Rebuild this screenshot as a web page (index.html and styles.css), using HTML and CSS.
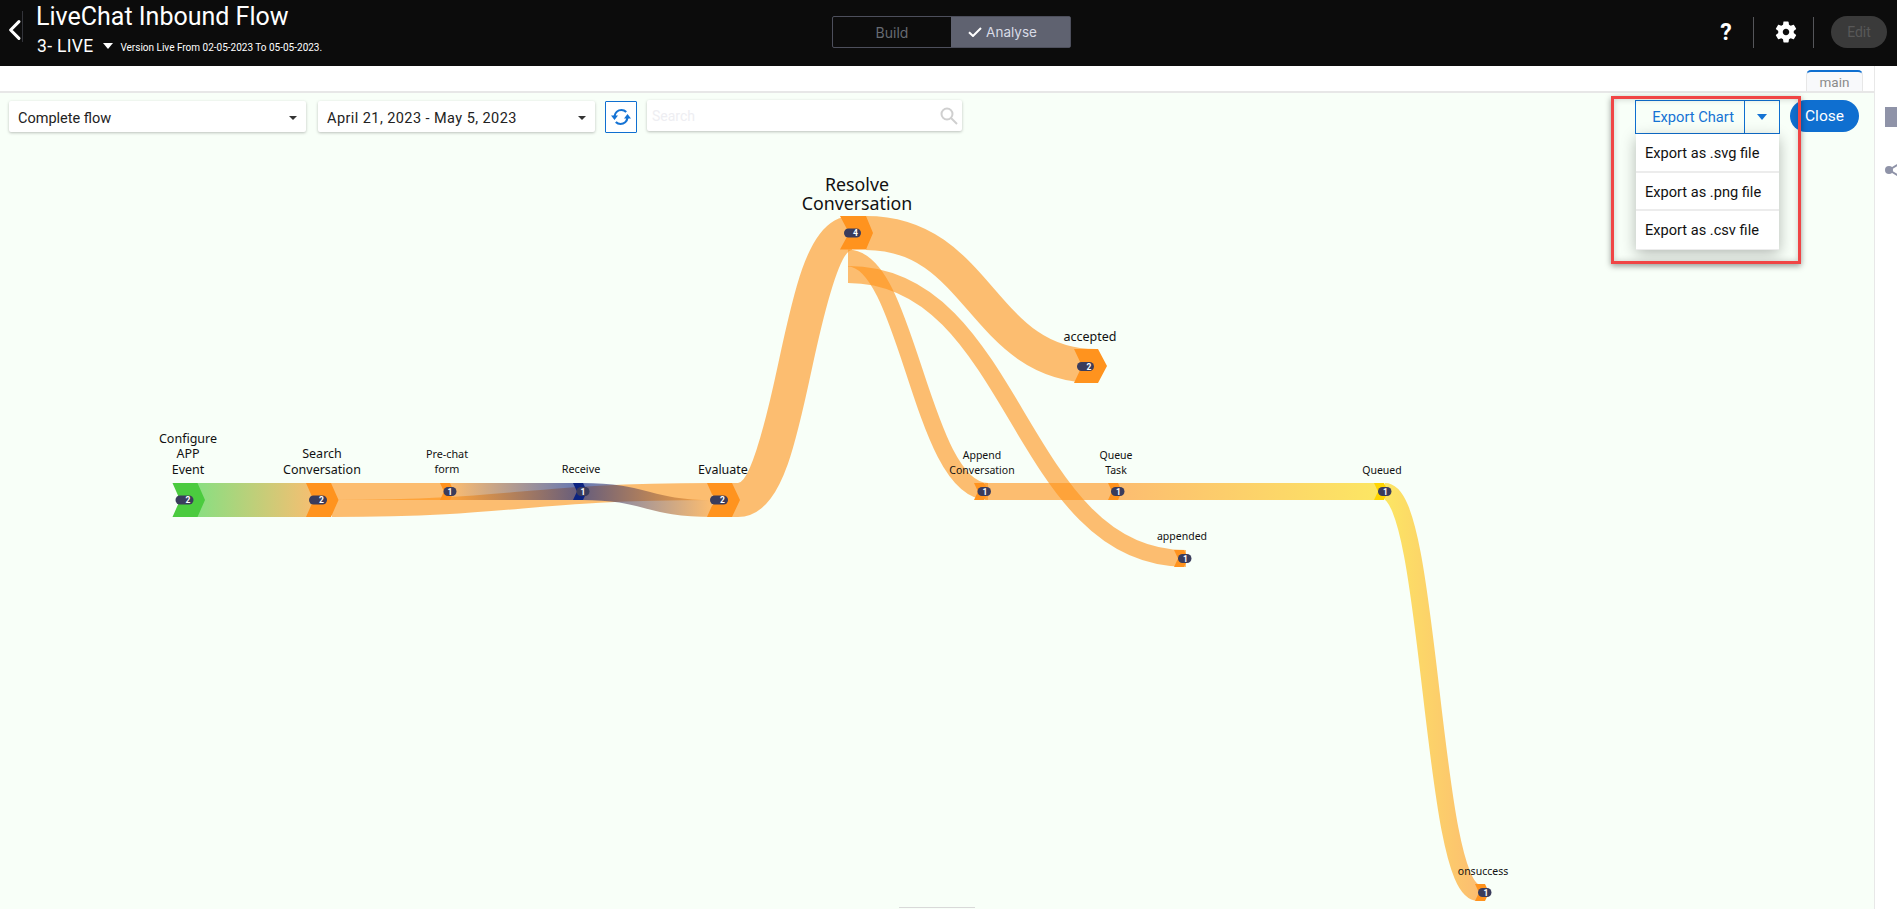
FILE: index.html
```html
<!DOCTYPE html>
<html lang="en">
<head>
<meta charset="utf-8">
<title>LiveChat Inbound Flow</title>
<link rel="stylesheet" href="styles.css">
</head>
<body>
<header class="topbar">
  <div class="topbar-left">
    <button class="back" aria-label="Back">
      <svg width="16" height="24" viewBox="0 0 16 24"><path class="back-chevron" d="M12.5 2.5 3 12l9.500 9.500"/></svg>
    </button>
    <div class="flow-title">
      <h1 class="flow-name">LiveChat Inbound Flow</h1>
      <div class="flow-meta">
        <span class="flow-version">3- LIVE</span>
        <span class="meta-caret"></span>
        <span class="flow-live">Version Live From 02-05-2023 To 05-05-2023.</span>
      </div>
    </div>
  </div>
  <div class="mode-switch">
    <span class="mode mode-build">Build</span>
    <span class="mode mode-analyse">
      <svg width="14" height="10" viewBox="0 0 14 10"><path class="check" d="M1 5.200 5 9 13 1"/></svg>
      Analyse
    </span>
  </div>
  <div class="topbar-right">
    <span class="help">?</span>
    <span class="bar-divider"></span>
    <svg class="gear" width="26" height="26" viewBox="0 0 24 24"><path d="M19.140 12.940c.04-.3.06-.61.06-.94 0-.32-.02-.64-.07-.94l2.030-1.580a.49.49 0 0 0 .12-.61l-1.920-3.320a.488.488 0 0 0-.59-.22l-2.390.96c-.5-.38-1.030-.7-1.620-.94l-.36-2.540a.484.484 0 0 0-.48-.41h-3.840c-.24 0-.43.17-.47.41l-.36 2.540c-.59.24-1.130.57-1.620.94l-2.390-.96c-.22-.08-.47 0-.59.22L2.740 8.870c-.12.21-.08.47.12.61l2.030 1.580c-.05.3-.09.63-.09.94s.02.64.07.94l-2.030 1.580a.49.49 0 0 0-.12.61l1.920 3.320c.12.22.37.29.59.22l2.390-.96c.5.38 1.030.7 1.620.94l.36 2.540c.05.24.24.41.48.41h3.840c.24 0 .44-.17.47-.41l.36-2.540c.59-.24 1.130-.56 1.620-.94l2.390.96c.22.08.47 0 .59-.22l1.920-3.320c.12-.22.07-.47-.12-.61l-2.010-1.580zM12 15c-1.650 0-3-1.350-3-3s1.350-3 3-3 3 1.350 3 3-1.350 3-3 3z"/></svg>
    <span class="bar-divider"></span>
    <span class="edit-pill">Edit</span>
  </div>
</header>

<div class="body-row">
  <main class="workspace">
    <div class="tabstrip"><span class="tab">main</span></div>
    <section class="canvas">
      <svg class="chart" width="1874" height="816" viewBox="0 93 1874 816">
        <defs>
          <linearGradient id="g-config" gradientUnits="userSpaceOnUse" x1="197" y1="0" x2="320" y2="0">
            <stop offset="0" stop-color="#3fc932"/><stop offset="1" stop-color="#ff9116"/>
          </linearGradient>
          <linearGradient id="g-pre" gradientUnits="userSpaceOnUse" x1="450" y1="0" x2="575" y2="0">
            <stop offset="0" stop-color="#ff9116"/><stop offset="1" stop-color="#0a2181"/>
          </linearGradient>
          <linearGradient id="g-rec" gradientUnits="userSpaceOnUse" x1="585" y1="0" x2="712" y2="0">
            <stop offset="0" stop-color="#0a2181"/><stop offset="1" stop-color="#ff9116"/>
          </linearGradient>
          <linearGradient id="g-queue" gradientUnits="userSpaceOnUse" x1="1120" y1="0" x2="1376" y2="0">
            <stop offset="0" stop-color="#ff9116"/><stop offset="1" stop-color="#ffd500"/>
          </linearGradient>
          <linearGradient id="g-done" gradientUnits="userSpaceOnUse" x1="1385" y1="0" x2="1478" y2="0">
            <stop offset="0" stop-color="#ffd500"/><stop offset="1" stop-color="#ff9116"/>
          </linearGradient>
        </defs>

        <g class="links">
          <path class="w34" stroke="url(#g-config)" d="M197 500H320"/>
          <path class="w17 orange" d="M331 491.500H445"/>
          <path class="w17 orange" d="M332 508.500C522 508.500 522 491.500 712 491.500"/>
          <path class="w17" stroke="url(#g-pre)" d="M450 491.500H578"/>
          <path class="w17" stroke="url(#g-rec)" d="M582 491.500C647 491.500 647 508.500 712 508.500"/>
          <path class="w34 orange" d="M725 500H738C795 500 795 233 852 233"/>
          <path class="w34 orange" d="M866 233C981 233 981 366 1096 366"/>
          <path class="w17 orange" d="M848 258C908 258 921 491.500 988 491.500"/>
          <path class="w17 orange" d="M848 274.500C1017 274.500 1017 558.500 1186 558.500"/>
          <path class="w17 orange" d="M985 491.500H1114"/>
          <path class="w17" stroke="url(#g-queue)" d="M1118 491.500H1378"/>
          <path class="w17" stroke="url(#g-done)" d="M1385 491.500C1431 491.500 1431 892.500 1478 892.500"/>
        </g>

        <g class="nodes">
          <polygon class="n-green" points="172.500,483 197.500,483 205,500 197.500,517 172.500,517 180,500"/>
          <polygon class="n-orange" points="306,483 331,483 338.500,500 331,517 306,517 313.500,500"/>
          <polygon class="n-orange" points="440,483 450,483 454,491.500 450,500 440,500 444,491.500"/>
          <polygon class="n-navy" points="573,483 583,483 587,491.500 583,500 573,500 577,491.500"/>
          <polygon class="n-orange" points="707,483 732,483 740,500 732,517 707,517 714.500,500"/>
          <polygon class="n-orange" points="840,216 866,216 873,233 866,249.500 840,249.500 849,233"/>
          <polygon class="n-orange" points="1074,349 1098,349 1107,366 1098,383 1074,383 1082,366"/>
          <polygon class="n-orange" points="974,483 984,483 989,491.500 984,500 974,500 978,491.500"/>
          <polygon class="n-orange" points="1108,483 1118,483 1122,491.500 1118,500 1108,500 1112,491.500"/>
          <polygon class="n-yellow" points="1374,483 1384,483 1388,491.500 1384,500 1374,500 1378,491.500"/>
          <polygon class="n-orange" points="1174,550 1184,550 1188,558.500 1184,567 1174,567 1178,558.500"/>
          <polygon class="n-orange" points="1475,884 1485,884 1489,892.500 1485,901 1475,901 1479,892.500"/>
        </g>

        <g class="badges">
          <rect class="pill" x="175.500" y="495.500" width="18" height="9" rx="4.500"/><text class="count" x="188" y="503">2</text>
          <rect class="pill" x="309" y="495.500" width="18" height="9" rx="4.500"/><text class="count" x="321.500" y="503">2</text>
          <rect class="pill" x="443.500" y="487" width="13" height="9" rx="4.500"/><text class="count" x="450" y="494.500">1</text>
          <rect class="pill" x="576.500" y="487" width="13" height="9" rx="4.500"/><text class="count" x="583" y="494.500">1</text>
          <rect class="pill" x="710" y="495.500" width="18" height="9" rx="4.500"/><text class="count" x="722.500" y="503">2</text>
          <rect class="pill" x="844" y="228.500" width="17" height="9" rx="4.500"/><text class="count" x="855.500" y="236">4</text>
          <rect class="pill" x="1077" y="362" width="17" height="9" rx="4.500"/><text class="count" x="1089" y="369.500">2</text>
          <rect class="pill" x="977.500" y="487" width="13.500" height="9" rx="4.500"/><text class="count" x="985" y="494.500">1</text>
          <rect class="pill" x="1111" y="487" width="13.500" height="9" rx="4.500"/><text class="count" x="1118.500" y="494.500">1</text>
          <rect class="pill" x="1378" y="487" width="13.500" height="9" rx="4.500"/><text class="count" x="1385.500" y="494.500">1</text>
          <rect class="pill" x="1178" y="554" width="13.500" height="9" rx="4.500"/><text class="count" x="1185.500" y="561.500">1</text>
          <rect class="pill" x="1478" y="888" width="13.500" height="9" rx="4.500"/><text class="count" x="1486" y="895.500">1</text>
        </g>

        <g class="labels">
          <text class="lb-m" x="188" y="443">Configure</text>
          <text class="lb-m" x="188" y="458">APP</text>
          <text class="lb-m" x="188" y="474">Event</text>
          <text class="lb-m" x="322" y="458">Search</text>
          <text class="lb-m" x="322" y="474">Conversation</text>
          <text class="lb-s" x="447" y="458">Pre-chat</text>
          <text class="lb-s" x="447" y="473">form</text>
          <text class="lb-s" x="581" y="473">Receive</text>
          <text class="lb-m" x="723" y="474">Evaluate</text>
          <text class="lb-l" x="857" y="191">Resolve</text>
          <text class="lb-l" x="857" y="210">Conversation</text>
          <text class="lb-m" x="1090" y="341">accepted</text>
          <text class="lb-t" x="982" y="459">Append</text>
          <text class="lb-t" x="982" y="474">Conversation</text>
          <text class="lb-t" x="1116" y="459">Queue</text>
          <text class="lb-t" x="1116" y="474">Task</text>
          <text class="lb-t" x="1382" y="474">Queued</text>
          <text class="lb-t" x="1182" y="540">appended</text>
          <text class="lb-t" x="1483" y="875">onsuccess</text>
        </g>
      </svg>

      <div class="toolbar">
        <div class="select select-flow"><span>Complete flow</span><i class="caret"></i></div>
        <div class="select select-date"><span>April 21, 2023 - May 5, 2023</span><i class="caret"></i></div>
        <button class="refresh" aria-label="Refresh">
          <svg width="20" height="18" viewBox="0 0 20 18">
            <path class="sync-arc" d="M3.500 8.500C4 4.500 7 2 10.500 2c2 0 3.500.8 4.700 2"/>
            <path class="sync-arc" d="M16.500 9.500C16 13.500 13 16 9.500 16c-2 0-3.500-.8-4.700-2"/>
            <path class="sync-head" d="M0 7.500h7l-3.500 4.500zM20 10.500h-7l3.500-4.500z"/>
          </svg>
        </button>
        <label class="search">
          <span class="search-hint">Search</span>
          <svg width="18" height="18" viewBox="0 0 18 18"><circle class="lens" cx="7" cy="7" r="5.500"/><path class="lens" d="M11 11l6 6"/></svg>
        </label>
        <div class="export">
          <div class="export-btn">
            <span class="export-label">Export Chart</span>
            <span class="export-toggle"><i class="caret-blue"></i></span>
          </div>
          <ul class="export-menu">
            <li>Export as .svg file</li>
            <li>Export as .png file</li>
            <li>Export as .csv file</li>
          </ul>
        </div>
        <button class="close">Close</button>
      </div>
      <div class="annotation"></div>
      <div class="scroll-handle"></div>
    </section>
  </main>
  <aside class="side">
    <span class="side-doc"></span>
    <svg class="side-share" width="23" height="22" viewBox="0 0 23 22"><path class="share-line" d="M5 11 18 3M5 11l13 8"/><circle class="share-dot" cx="5" cy="11" r="4"/></svg>
  </aside>
</div>
</body>
</html>
```

FILE: styles.css
```css
* { box-sizing: border-box; }
html, body { margin: 0; height: 100%; overflow: hidden; }
body {
  width: 1897px;
  height: 909px;
  font-family: Roboto, "Liberation Sans", sans-serif;
  background: #fff;
  display: flex;
  flex-direction: column;
}

/* top bar */
.topbar {
  height: 66px;
  flex: none;
  background: #0c0c0c;
  position: relative;
  display: flex;
  align-items: flex-start;
  justify-content: space-between;
  color: #fff;
}
.topbar-left { display: flex; width: 832px; }
.back {
  height: 31px;
  margin: 11px 0 0 8px;
  padding: 0;
  background: none;
  border: 0;
  border-right: 1px solid #33343a;
  display: flex;
  align-items: flex-end;
  box-sizing: content-box;
  width: 14px;
}
.back-chevron { fill: none; stroke: #fff; stroke-width: 3.500; stroke-linecap: round; stroke-linejoin: round; }
.flow-title { margin-left: 13px; }
.flow-name {
  margin: 3px 0 0;
  font-size: 25px;
  line-height: 28px;
  font-weight: 400;
  white-space: nowrap;
}
.flow-meta { display: flex; align-items: center; margin-top: 5px; margin-left: 1px; height: 20px; }
.flow-version { font-size: 17.500px; letter-spacing: .3px; }
.meta-caret {
  margin-left: 10px;
  border-left: 5px solid transparent;
  border-right: 5px solid transparent;
  border-top: 6px solid #fff;
}
.flow-live { margin-left: 7px; font-size: 10px; margin-top: 3px; white-space: nowrap; }

.mode-switch {
  margin-top: 16px;
  width: 239px;
  height: 32px;
  display: flex;
  border: 1px solid #4d4f5c;
  border-radius: 2px;
  font-family: Inter, Roboto, sans-serif;
  font-size: 13.500px;
}
.mode { display: flex; align-items: center; justify-content: center; gap: 4px; }
.mode-build { width: 118px; color: #666a72; font-size: 14px; }
.mode-analyse { flex: 1; background: #5f6270; color: #d8dbe6; padding-right: 16px; }
.check { fill: none; stroke: #fff; stroke-width: 2; }

.topbar-right { width: 826px; display: flex; justify-content: flex-end; align-items: center; height: 32px; margin-top: 16px; padding-right: 10px; }
.help { font-size: 23px; font-weight: 700; width: 14px; text-align: center; margin-right: 20px; }
.bar-divider { width: 1px; height: 31px; background: #55565a; }
.gear { fill: #fff; margin: 0 14px 0 19px; }
.edit-pill {
  margin-left: 17px;
  width: 56px;
  height: 32px;
  line-height: 32px;
  text-align: center;
  border-radius: 16px;
  background: #3a3a3a;
  color: #585858;
  font-size: 14px;
}

.body-row { flex: 1; display: flex; min-height: 0; }
.workspace { width: 1874px; display: flex; flex-direction: column; }
.side {
  width: 23px;
  border-left: 1px solid #e8e8e8;
  background: #fff;
  padding: 41px 0 0 10px;
  display: flex;
  flex-direction: column;
  gap: 32px;
  overflow: hidden;
}
.side-doc {
  display: block;
  width: 20px;
  height: 20px;
  flex: none;
  background: #8f93a8;
}
.side-share { flex: none; margin-left: -1px; }
.share-line { stroke: #8f93a8; stroke-width: 2; fill: none; }
.share-dot { fill: #8f93a8; }

.tabstrip {
  height: 27px;
  flex: none;
  background: #fff;
  border-bottom: 2px solid #e7e7e7;
  display: flex;
  justify-content: flex-end;
  align-items: flex-end;
  padding-right: 11px;
}
.tab {
  width: 57px;
  height: 22px;
  margin-bottom: -1px;
  text-align: center;
  font-size: 13.500px;
  line-height: 20px;
  color: #8a8a8a;
  background: #f8f9fb;
  border: 1px solid #e7e7e7;
  border-top: 2px solid #0f6fd0;
  border-radius: 5px 5px 0 0;
}

/* canvas */
.canvas { flex: 1; position: relative; background: #f8fff8; }
.chart { position: absolute; left: 0; top: 0; }
.links path { fill: none; stroke-opacity: .6; }
.w34 { stroke-width: 34; }
.w17 { stroke-width: 17; }
.orange { stroke: #ff9116; }
.n-green { fill: #4bcb3f; }
.n-orange { fill: #ff931e; }
.n-navy { fill: #0c2480; }
.n-yellow { fill: #ffd500; }
.pill { fill: #3a3c5c; }
.count { fill: #fff; font: 700 8.500px Roboto, sans-serif; text-anchor: middle; }
.labels text { font-family: "Noto Sans", sans-serif; text-anchor: middle; fill: #111; }
.lb-l { font-size: 17.800px; }
.lb-m { font-size: 12.500px; }
.lb-s { font-size: 10.800px; }
.lb-t { font-size: 10.500px; }

.toolbar {
  position: relative;
  display: flex;
  align-items: flex-start;
  padding: 8px 0 0 9px;
  height: 60px;
}
.select {
  height: 31px;
  background: #fff;
  border-radius: 2px;
  box-shadow: 0 1px 3px rgba(0,0,0,.25);
  display: flex;
  align-items: center;
  justify-content: space-between;
  padding: 3px 9px 0;
  font-size: 14.500px;
  color: #222;
}
.select-flow { width: 297px; }
.select-date { width: 277px; margin-left: 12px; letter-spacing: .43px; }
.caret { border-left: 4px solid transparent; border-right: 4px solid transparent; border-top: 4px solid #333; }
.refresh {
  margin-left: 10px;
  width: 32px;
  height: 32px;
  padding: 0;
  border: 1px solid #0f6fd0;
  border-radius: 1px;
  background: #fff;
  display: flex;
  align-items: center;
  justify-content: center;
}
.sync-arc { fill: none; stroke: #1473d4; stroke-width: 2.200; }
.sync-head { fill: #1473d4; }
.search {
  margin-left: 10px;
  width: 315px;
  height: 31px;
  background: #fff;
  border-radius: 2px;
  box-shadow: 0 1px 3px rgba(0,0,0,.25);
  display: flex;
  align-items: center;
  justify-content: space-between;
  padding: 0 4px 0 5px;
  font-size: 14px;
  margin-top: -1px;
}
.search-hint { color: #eeeef2; }
.lens { fill: none; stroke: #cfcfcf; stroke-width: 2; }

.export { position: relative; margin-left: 673px; width: 145px; margin-top: -1px; z-index: 2; }
.export-btn {
  height: 34px;
  border: 1px solid #0f6fd0;
  display: flex;
  color: #1473d4;
  font-size: 14.700px;
}
.export-label { width: 108px; line-height: 32px; text-align: right; padding-right: 10px; flex: none; white-space: nowrap; }
.export-toggle {
  flex: 1;
  border-left: 1px solid #0f6fd0;
  display: flex;
  align-items: center;
  justify-content: center;
}
.caret-blue { border-left: 5.500px solid transparent; border-right: 5.500px solid transparent; border-top: 6px solid #1473d4; }
.export-menu {
  position: absolute;
  left: 1px;
  top: 34px;
  width: 143px;
  margin: 0;
  padding: 0;
  list-style: none;
  background: #fff;
  box-shadow: 0 4px 14px rgba(0,0,0,.28);
}
.export-menu li {
  height: 38.500px;
  line-height: 39px;
  padding-left: 9px;
  font-size: 14.600px;
  color: #111;
  border-bottom: 2px solid #ececec;
  white-space: nowrap;
}
.export-menu li:last-child { border-bottom: 1px solid #ececec; }
.close {
  margin-left: 10px;
  margin-top: -1px;
  width: 69px;
  height: 32px;
  border: 0;
  border-radius: 16px;
  background: #0f6fd0;
  color: #fff;
  font: 400 15.500px Roboto, sans-serif;
  padding: 0;
  position: relative;
  z-index: 2;
}
.annotation {
  position: absolute;
  left: 1611px;
  top: 3px;
  width: 190px;
  height: 168px;
  border: 3px solid #f04545;
  box-shadow: 0 2px 6px rgba(0,0,0,.4), inset 0 0 6px rgba(0,0,0,.2);
  z-index: 3;
  pointer-events: none;
}
.scroll-handle {
  position: absolute;
  left: 899px;
  bottom: 1px;
  width: 76px;
  height: 1px;
  background: #d9d9d9;
}
```
